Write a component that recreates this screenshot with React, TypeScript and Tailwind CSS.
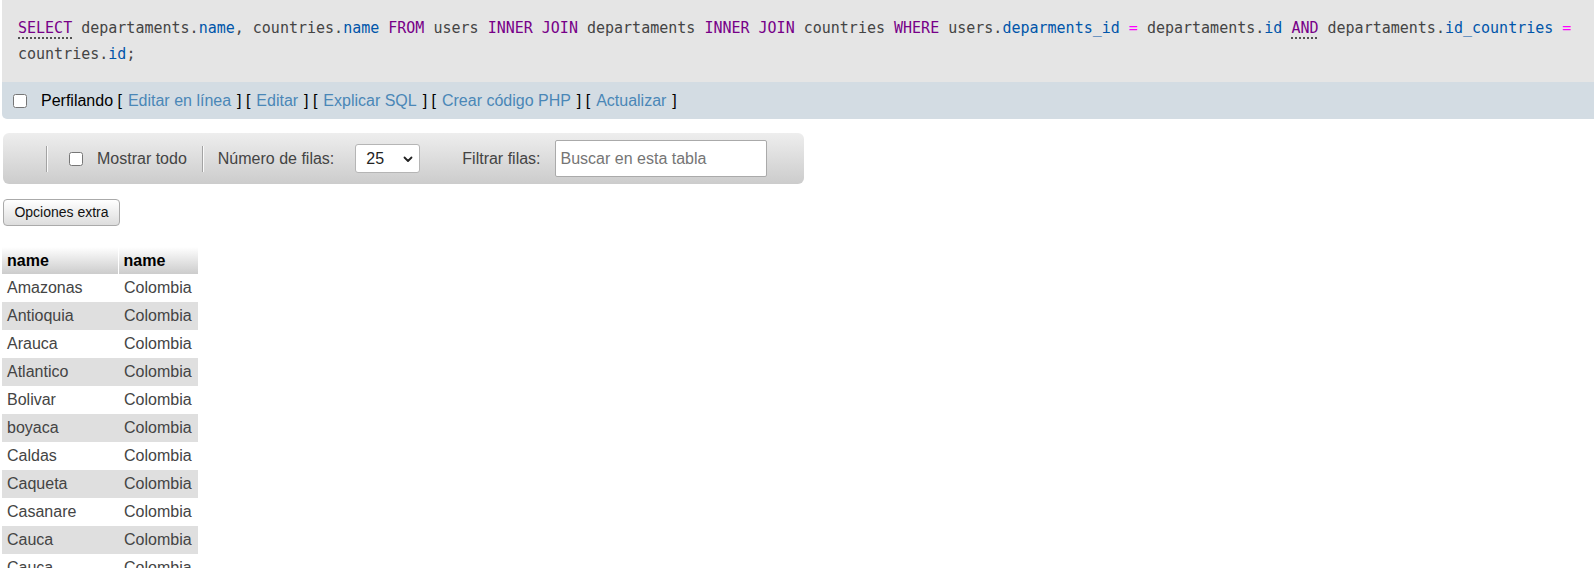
import React from 'react';

type Tok = [string, 'p' | 'k' | 'ka' | 'v' | 'o'];

const line1: Tok[] = [
  ['SELECT', 'ka'],
  [' departaments.', 'p'],
  ['name', 'v'],
  [', countries.', 'p'],
  ['name', 'v'],
  [' ', 'p'],
  ['FROM', 'k'],
  [' users ', 'p'],
  ['INNER JOIN', 'k'],
  [' departaments ', 'p'],
  ['INNER JOIN', 'k'],
  [' countries ', 'p'],
  ['WHERE', 'k'],
  [' users.', 'p'],
  ['deparments_id', 'v'],
  [' ', 'p'],
  ['=', 'o'],
  [' departaments.', 'p'],
  ['id', 'v'],
  [' ', 'p'],
  ['AND', 'ka'],
  [' departaments.', 'p'],
  ['id_countries', 'v'],
  [' ', 'p'],
  ['=', 'o'],
];

const line2: Tok[] = [
  ['countries.', 'p'],
  ['id', 'v'],
  [';', 'p'],
];

const rows = [
  'Amazonas',
  'Antioquia',
  'Arauca',
  'Atlantico',
  'Bolivar',
  'boyaca',
  'Caldas',
  'Caqueta',
  'Casanare',
  'Cauca',
  'Cauca',
];

const links = ['Editar en línea', 'Editar', 'Explicar SQL', 'Crear código PHP', 'Actualizar'];

function Token({ t }: { t: Tok }) {
  const [text, kind] = t;
  if (kind === 'k') return <span className="text-[#770088]">{text}</span>;
  if (kind === 'ka')
    return (
      <span className="text-[#770088] underline decoration-dotted decoration-[#222] underline-offset-[5px]">
        {text}
      </span>
    );
  if (kind === 'v') return <span className="text-[#0055aa]">{text}</span>;
  if (kind === 'o') return <span className="text-[#ff00ff]">{text}</span>;
  return <span>{text}</span>;
}

const Sep = () => (
  <div className="flex h-[26px]">
    <div className="w-px bg-[#a3a3a3]" />
    <div className="w-px bg-[#fafafa]" />
  </div>
);

export default function App() {
  return (
    <div className="h-screen overflow-hidden bg-white pl-[2px] font-['Liberation_Sans',Arial,sans-serif] text-[16px] text-[#444]">
      {/* sql box */}
      <div className="bg-[#e5e5e5] pl-[16px] pt-[15px] pb-[15px] font-['DejaVu_Sans_Mono',monospace] text-[15px] leading-[26px] text-[#444] whitespace-pre">
        <div>
          {line1.map((t, i) => (
            <Token key={i} t={t} />
          ))}
        </div>
        <div>
          {line2.map((t, i) => (
            <Token key={i} t={t} />
          ))}
        </div>
      </div>
      <div className="flex h-[37px] items-center rounded-bl-[5px] bg-[#d3dce3] pl-[11px] text-black">
        <input type="checkbox" className="m-0 h-[14px] w-[14px]" />
        <span className="ml-[14px] whitespace-pre">
          Perfilando
          {links.map((l) => (
            <span key={l}>
              {' [ '}
              <a className="mx-[1.5px] text-[#4a87b7]">{l}</a>
              {' ]'}
            </span>
          ))}
        </span>
      </div>

      {/* navigation toolbar */}
      <div className="mt-[14px] ml-px flex h-[51px] w-[801px] items-center rounded-[6px] bg-gradient-to-b from-[#eeeeee] to-[#cccccc] pl-[43px] text-[#444]">
        <Sep />
        <input type="checkbox" className="m-0 ml-[21px] h-[14px] w-[14px]" />
        <span className="ml-[14px]">Mostrar todo</span>
        <div className="ml-[15px]">
          <Sep />
        </div>
        <span className="ml-[14px]">Número de filas:</span>
        <div className="ml-[21px] flex h-[29px] w-[65px] items-center justify-between rounded-[3px] border border-[#b5b5b5] bg-white pl-[10px] pr-[5px] text-[#222]">
          <span>25</span>
          <svg width="12" height="12" viewBox="0 0 12 12" fill="none">
            <path d="M2.5 4.5 L6 8 L9.5 4.5" stroke="#222" strokeWidth="1.8" strokeLinecap="round" strokeLinejoin="round" />
          </svg>
        </div>
        <span className="ml-[42px]">Filtrar filas:</span>
        <div className="ml-[14px] flex h-[37px] w-[212px] items-center rounded-[2px] border border-[#aaaaaa] bg-white pl-[5px] text-[#757575]">
          Buscar en esta tabla
        </div>
      </div>

      <button className="mt-[15px] ml-px flex h-[27px] w-[117px] items-center justify-center rounded-[4px] border border-[#aaaaaa] bg-gradient-to-b from-[#ffffff] to-[#dddddd] text-[14px] text-[#111]">
        Opciones extra
      </button>

      {/* results */}
      <table className="mt-[21px] border-collapse">
        <thead>
          <tr className="h-[27px] bg-gradient-to-b from-[#ffffff] to-[#cccccc] text-left text-black">
            <th className="w-[116px] border-r border-white pl-[5px] font-bold">name</th>
            <th className="w-[80px] pl-[5px] font-bold">name</th>
          </tr>
        </thead>
        <tbody>
          {rows.map((r, i) => (
            <tr key={i} className={`h-[28px] ${i % 2 === 1 ? 'bg-[#dfdfdf]' : 'bg-white'} text-[#444]`}>
              <td className="pl-[5px]">{r}</td>
              <td className="pl-[6px]">Colombia</td>
            </tr>
          ))}
        </tbody>
      </table>
    </div>
  );
}
